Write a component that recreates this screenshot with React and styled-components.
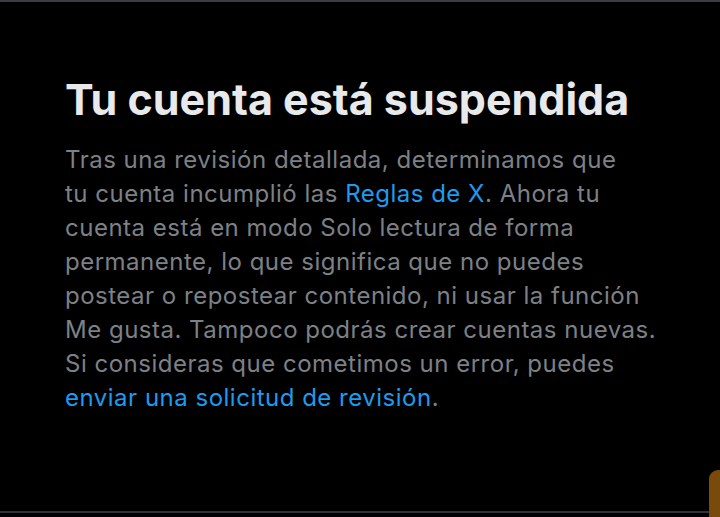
import React from "react";
import styled, { createGlobalStyle } from "styled-components";

const Global = createGlobalStyle`
  html, body { margin: 0; padding: 0; background: #000; }
  body { font-family: Inter, Roboto, sans-serif; -webkit-font-smoothing: antialiased; }
`;

const Screen = styled.div`
  position: relative;
  width: 720px;
  height: 517px;
  background: #000;
  border-top: 2px solid #3a3d42;
  box-sizing: border-box;
  overflow: hidden;
  display: flex;
  flex-direction: column;
`;

const Content = styled.main`
  flex: 1;
  padding: 71px 0 0 65px;
  display: flex;
  flex-direction: column;
  gap: 18px;
`;

const Title = styled.h1`
  margin: 0;
  font-family: Inter, sans-serif;
  font-weight: 700;
  font-size: 43px;
  line-height: 52px;
  color: #e7e9ea;
`;

const Body = styled.p`
  margin: 0;
  font-size: 24px;
  line-height: 34px;
  color: #7d8186;
  white-space: nowrap;
  letter-spacing: 0.5px;
`;

const Link = styled.a`
  color: #1d9bf0;
  text-decoration: none;
`;

const BottomRule = styled.div`
  height: 2px;
  background: #2f3236;
  margin-bottom: 4px;
  margin-right: 11px;
`;

const Tab = styled.div`
  position: absolute;
  right: 0;
  bottom: 0;
  width: 11px;
  height: 47px;
  background: #7a4a0c;
  border-top-left-radius: 9px;
`;

export default function App() {
  return (
    <>
      <Global />
      <Screen>
        <Content>
          <Title>Tu cuenta está suspendida</Title>
          <Body>
            Tras una revisión detallada, determinamos que
            <br />
            tu cuenta incumplió las <Link href="#">Reglas de X</Link>. Ahora tu
            <br />
            cuenta está en modo Solo lectura de forma
            <br />
            permanente, lo que significa que no puedes
            <br />
            postear o repostear contenido, ni usar la función
            <br />
            Me gusta. Tampoco podrás crear cuentas nuevas.
            <br />
            Si consideras que cometimos un error, puedes
            <br />
            <Link href="#">enviar una solicitud de revisión</Link>.
          </Body>
        </Content>
        <BottomRule />
        <Tab />
      </Screen>
    </>
  );
}
